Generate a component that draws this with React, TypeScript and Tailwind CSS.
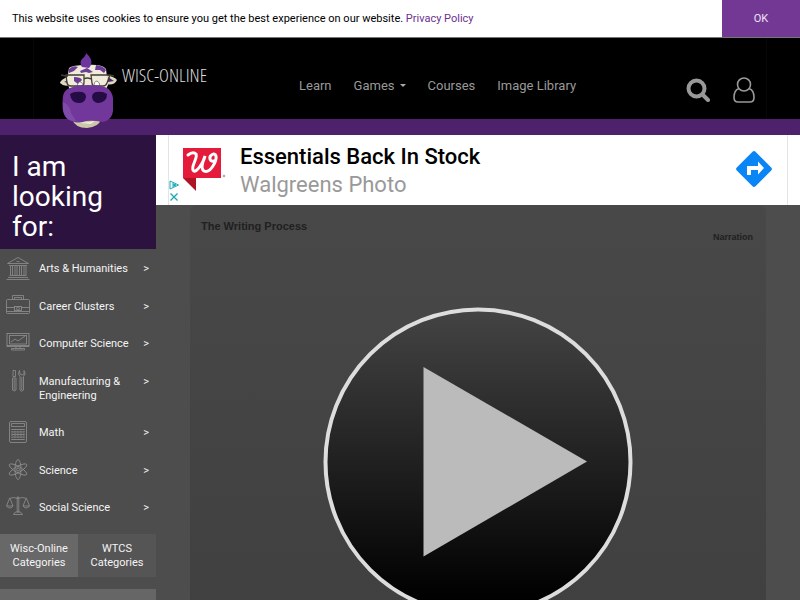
import type { ReactNode } from "react";

const categories: { name: string; icon: ReactNode }[] = [
  {
    name: "Arts & Humanities",
    icon: (
      <>
        <path d="M1.500 6.500 12 .5l10.500 6zM3 8.500h18M3.500 18.500h17M2 20.500h20M.5 22.500h23M10.500 4.500h3" />
        <path d="M4.500 9v9M6.500 9v9M9 9v9M11 9v9M13.500 9v9M15.500 9v9M18 9v9M20 9v9" />
      </>
    ),
  },
  {
    name: "Career Clusters",
    icon: (
      <>
        <rect x=".5" y="4.500" width="23" height="14" rx="1" />
        <path d="M6.500 4.500v-4h11v4M8.500 4.500v-2h7v2M.5 12.500h8M15.500 12.500h8M1 16.500h22" />
        <rect x="8.500" y="11.500" width="7" height="4" />
        <circle cx="12" cy="13.500" r="1.500" />
      </>
    ),
  },
  {
    name: "Computer Science",
    icon: (
      <>
        <rect x="1" y="1.500" width="22" height="13" />
        <path d="M3 3.500h18M3.500 3.500v8.500h17V3.500M5 10l4-3 3 2 7-5M1 13.500h22M10 14.500v2M14 14.500v2M5.500 16.500h13v1.500h-13z" />
      </>
    ),
  },
  {
    name: "Manufacturing & Engineering",
    icon: (
      <>
        <path d="M7 .5h2.500v6H7zM6.500 8h3.500v12q-1.700 2-3.500 0zM8.200 9v11" />
        <path d="M13.500.5q-2.500 3.500.5 6v13.500q1.500 2.500 3.500 0v-13.500q3-2.500.5-6v3.500l-2 1-2-1zM15.800 7v13" />
      </>
    ),
  },
  {
    name: "Math",
    icon: (
      <>
        <rect x="3.500" y=".5" width="17" height="21" rx="1.500" />
        <path d="M5.500 2.500h13v3h-13zM5.500 8.500h13M5.500 11h13M5.500 13.500h13M5.500 16h13M5.500 18.500h13" />
        <path d="M6 8v12M9 8v12M12 8v12M15 8v12M18 8v12" strokeDasharray="1 1" />
      </>
    ),
  },
  {
    name: "Science",
    icon: (
      <>
        <ellipse cx="12" cy="10.500" rx="3" ry="10" />
        <ellipse cx="12" cy="10.500" rx="3" ry="10" transform="rotate(60 12 10.500)" />
        <ellipse cx="12" cy="10.500" rx="3" ry="10" transform="rotate(120 12 10.500)" />
        <circle cx="12" cy="10.500" r="1.500" />
      </>
    ),
  },
  {
    name: "Social Science",
    icon: (
      <>
        <path d="M11.200 1h1.600v15h-1.600zM3 2.500q5-2 9 0q4-2 9 0M3.500 2.500.5 10M4 2.500 7 10M20 2.500 17 10M20.500 2.500l3 7.500" />
        <path d="M.5 10h6.500q-3 4-6.500 0zM17 10h6.500q-3.500 4-6.500 0zM9.500 16h5l2 2.500h-9z" />
      </>
    ),
  },
];

function CowLogo() {
  return (
    <svg viewBox="0 0 60 78" className="h-[78px] w-[60px] shrink-0" aria-hidden="true">
      <path d="M11 23Q2 27 2 30q4 4 10 2zM48 22q9 2 11 5-3 6-11 4z" fill="#ddd9c0" />
      <path d="M6 29l6-3-1 4zM50 24l6 4-6 1z" fill="#512974" />
      <path d="M11 15q3-3 18-3 15-1 19 4l2 16-3 6H12L9 28z" fill="#f0ecd9" />
      <path d="M11 16q4-4 9-2l-4 4-5 2zM22 18l7-3 6 4-4 1-3-1-5 1zM38 12q8 1 10 5l-2 3-4-3-5 0zM16 24q7 0 8 3l-4 4-4-3z" fill="#6d3c99" />
      <path d="M24 14q-3-5 0-8 4-3 4-6 7 6 5 12l-2 3z" fill="#6d369d" />
      <path d="M19 34q1-6 4-5 3 2 2 6M36 34q0-6 3-6 3 1 3 6" fill="#fff" stroke="#494334" strokeWidth=".6" />
      <path d="M8 22h18v8q0 3-3 3H13q-3 0-4-3zM33 22h19l-3 8q-1 3-4 3h-8q-3 0-3-3zM26 26q3-2 7 0M3 22l5 1M52 22l4 1" fill="none" stroke="#413d34" strokeWidth="1.300" />
      <path d="M14 66q3 9 15 9 12-1 14-9z" fill="#cbc8aa" />
      <path d="M19 68q10 3 19-1l-5 4-10-1z" fill="#f0ecd8" />
      <path d="M12 35q6-3 18-3 14 0 19 3 5 3 6 10v13q-1 9-10 11-10-2-17-1-8 3-14 0Q7 67 5 58 4 52 5 43q1-6 7-8z" fill="#72379a" />
      <path d="M5 49q7 3 8 11l5 8Q7 69 5 56z" fill="#7f4ba8" />
      <path d="M12 41q4-3 12-2 4 1 4 5-1 6-7 6-8 0-9-9zM34 44q0-4 4-5 7-1 11 2 0 8-8 9-6 0-7-6z" fill="#250c45" />
    </svg>
  );
}

function CookieBar() {
  return (
    <div className="flex h-[38px] shrink-0 items-stretch justify-between border-b border-[#777] bg-white text-[11px] text-black">
      <p className="self-center pl-3 pt-[2px]">
        This website uses cookies to ensure you get the best experience on our website.{" "}
        <a href="#privacy" className="text-[#6b2f8f]">Privacy Policy</a>
      </p>
      <button className="w-[78px] bg-[#733894] pt-[2px] text-[#eee3f4]">OK</button>
    </div>
  );
}

function Header() {
  return (
    <header className="h-[97px] shrink-0 border-b-[16px] border-[#4e216c] bg-black">
      <div className="mx-[33px] flex h-[81px] border-x border-[#080808]">
        <a href="#home" className="flex w-[265px] shrink-0 pl-[24px] pt-[15px]" aria-label="Wisc-Online home">
          <CowLogo />
          <span className="ml-1 pt-[8px] font-['Open_Sans_Condensed_Light','Roboto_Condensed_Light','Roboto_Condensed','Open_Sans_Condensed',sans-serif] text-[19px] font-light leading-[28px] text-[#ddd]">
            WISC-ONLINE
          </span>
        </a>
        <nav className="flex items-center gap-[22px] pt-[14px] text-[13px] text-[#999]">
          <a href="#learn">Learn</a>
          <button className="flex items-center gap-[5px]">
            Games
            <span className="border-x-[3px] border-t-[3px] border-x-transparent border-t-[#aaa]" />
          </button>
          <a href="#courses">Courses</a>
          <a href="#images">Image Library</a>
        </nav>
        <div className="ml-auto flex items-center gap-[22px] pr-[10px] pt-[23px] text-[#999]">
          <button aria-label="Search">
            <svg viewBox="0 0 24 24" className="size-[24px]" fill="none" stroke="currentColor">
              <circle cx="10.500" cy="10.500" r="8" strokeWidth="4" />
              <path d="m17 17 5 5" strokeWidth="4" strokeLinecap="round" />
            </svg>
          </button>
          <button aria-label="Account">
            <svg viewBox="0 0 24 26" className="h-[26px] w-[24px]" fill="none" stroke="currentColor" strokeWidth="1.600">
              <circle cx="12" cy="7.500" r="6.500" />
              <path d="M7 11.500q-5 1.500-5 9 0 4.500 4 4.500h12q4 0 4-4.500 0-7.500-5-9" />
            </svg>
          </button>
        </div>
      </div>
    </header>
  );
}

function Sidebar() {
  return (
    <aside className="flex w-[156px] shrink-0 flex-col text-[11px] leading-[14px] text-[#f4f4f4]">
      <h2 className="h-[114px] shrink-0 bg-[#2b123f] px-3 pt-[17px] text-[28px] leading-[30px] text-white">
        I am looking for:
      </h2>
      <ul className="mt-[13px] flex h-[253px] shrink-0 flex-col justify-between">
        {categories.map(({ name, icon }) => (
          <li key={name}>
            <a href="#category" className="flex items-start pl-[6px] pr-[7px]">
              <svg viewBox="0 0 24 24" className="-my-[5px] mr-[9px] size-[24px] shrink-0" fill="none" stroke="#919191" strokeWidth=".8" aria-hidden="true">
                {icon}
              </svg>
              <span className="min-w-0 flex-1">{name}</span>
              <span className="ml-1">&gt;</span>
            </a>
          </li>
        ))}
      </ul>
      <div className="mt-[19px] grid h-[43px] shrink-0 grid-cols-2 text-center">
        <button className="bg-[#686868] px-2">Wisc-Online Categories</button>
        <button className="bg-[#555] px-2">WTCS Categories</button>
      </div>
      <div className="mt-3 h-10 shrink-0 bg-[#666]" />
    </aside>
  );
}

function AdBanner() {
  return (
    <section className="h-[70px] shrink-0 bg-white px-3" aria-label="Advertisement">
      <div className="flex h-full border-x border-[#e4e4e4]">
        <div className="flex w-[14px] flex-col items-start gap-[2px] pt-[45px]">
          <button aria-label="About this ad">
            <svg viewBox="0 0 10 10" className="block size-[10px]" fill="none" stroke="#15a9b8">
              <path d="M1 1 9.500 5 1 9zM4 3v4M4 4l3 1-3 1" />
            </svg>
          </button>
          <button aria-label="Close ad">
            <svg viewBox="0 0 10 10" className="block size-[10px]" fill="none" stroke="#15a9b8" strokeWidth="1.300">
              <path d="m1.500 1.500 7 7M8.500 1.500l-7 7" />
            </svg>
          </button>
        </div>
        <svg viewBox="0 0 44 46" className="mt-[12px] h-[46px] w-[44px]" role="img" aria-label="Walgreens">
          <path d="M0 1h38v30H0z" fill="#e51b3c" />
          <path d="M0 31h13v13z" fill="#ae1424" />
          <path d="M5 8q5-4 8-1c2 4-5 12-3 16 3 5 11-9 12-14-2 5-5 13-1 15 6 3 13-10 12-15-1-4-7-1-6 3q1 3 4 2" fill="none" stroke="#fff" strokeWidth="3" strokeLinecap="round" />
          <circle cx="41" cy="29" r="1" fill="#bbb" stroke="#888" strokeWidth=".5" />
        </svg>
        <div className="ml-[13px] pt-[8px]">
          <h3 className="text-[22px] font-medium leading-[28px] text-black">Essentials Back In Stock</h3>
          <p className="text-[22px] leading-[27px] text-[#999]">Walgreens Photo</p>
        </div>
        <a href="#directions" aria-label="Get directions" className="ml-auto mr-[15px] mt-[16px]">
          <svg viewBox="0 0 36 36" className="size-[36px]">
            <path d="M16.500.8q1.500-1.500 3 0l15.700 15.700q1.500 1.500 0 3L19.500 35.200q-1.500 1.500-3 0L.8 19.500q-1.500-1.500 0-3z" fill="#0a85f5" />
            <path d="M11 24v-9h11v-4.500l6 6.500-6 6.500V19h-7v5z" fill="#fff" />
          </svg>
        </a>
      </div>
    </section>
  );
}

function Player() {
  return (
    <section className="mx-[34px] flex-1 rounded-t-md bg-linear-to-b from-[#484848] to-[#404040] font-['Liberation_Sans',Arial,sans-serif] font-bold text-[#202020]">
      <h1 className="px-[11px] pt-[14px] text-[11px] leading-[14px]">The Writing Process</h1>
      <p className="pr-[13px] text-right text-[9px] leading-[8px]">Narration</p>
      <button className="mx-auto mt-[66px] block" aria-label="Play">
        <svg viewBox="0 0 310 310" className="size-[310px]">
          <defs>
            <linearGradient id="disc" x1="0" y1="0" x2="0" y2="1">
              <stop stopColor="#444" />
              <stop offset=".95" stopColor="#000" />
            </linearGradient>
          </defs>
          <circle cx="155" cy="155" r="152.500" fill="url(#disc)" stroke="#ddd" strokeWidth="4" />
          <path d="M100.500 60 264 154.500l-163.500 95z" fill="#bbb" />
        </svg>
      </button>
    </section>
  );
}

export default function App() {
  return (
    <div className="flex h-screen flex-col overflow-hidden bg-[#4d4d4d] font-['Roboto','Liberation_Sans',sans-serif]">
      <CookieBar />
      <Header />
      <div className="flex min-h-0 flex-1">
        <Sidebar />
        <main className="flex min-w-0 flex-1 flex-col">
          <AdBanner />
          <Player />
        </main>
      </div>
    </div>
  );
}
